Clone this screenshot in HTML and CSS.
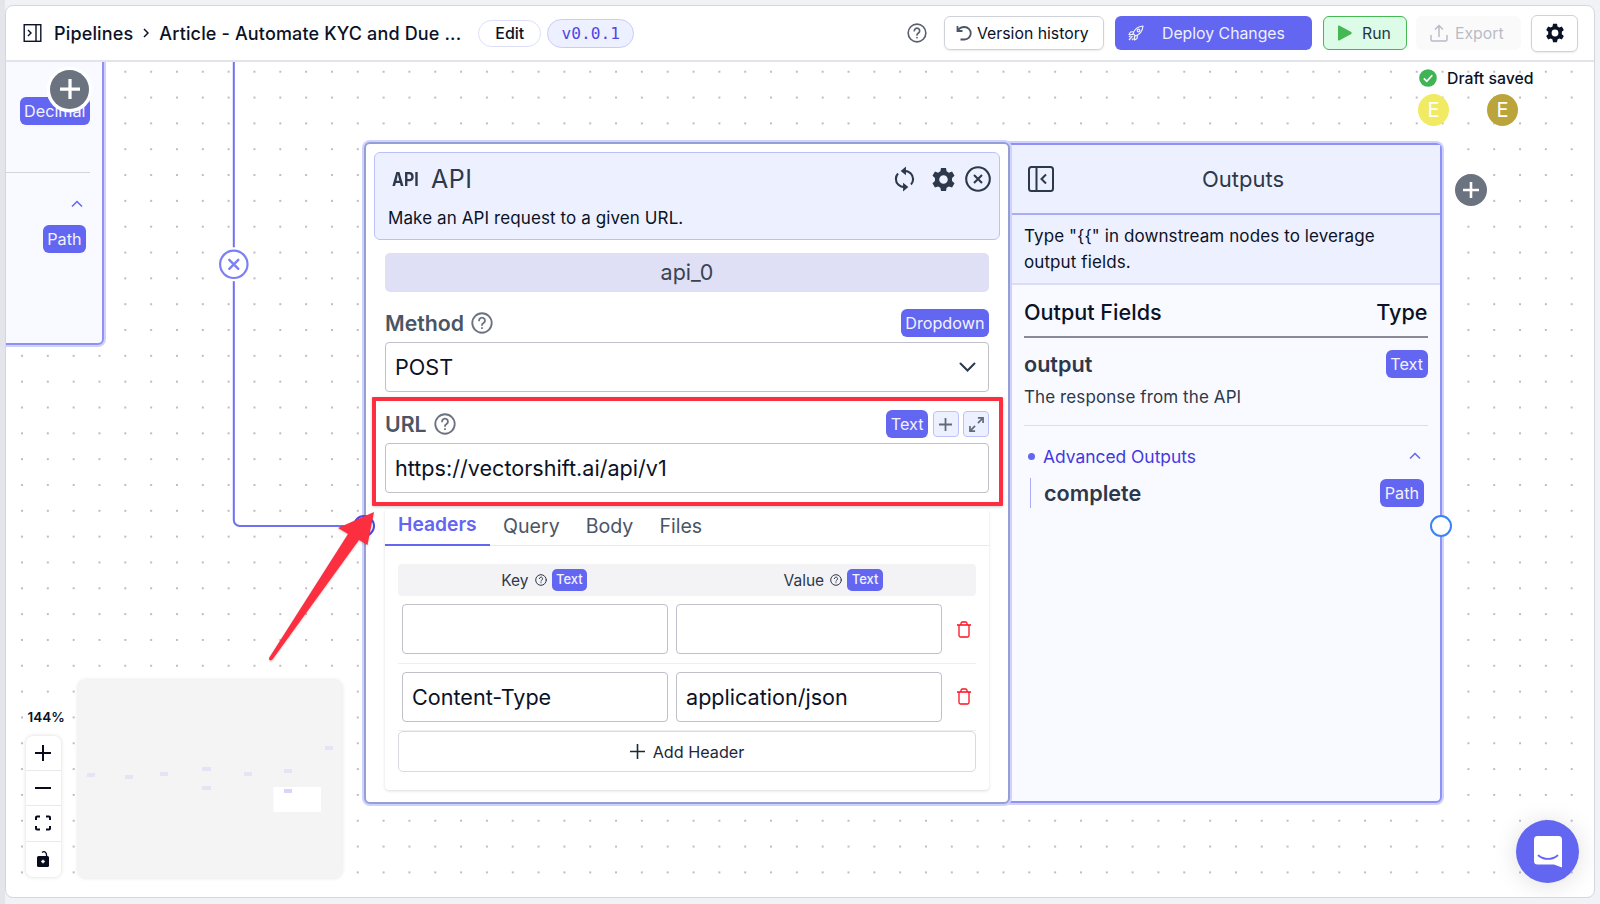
FILE: index.html
```
<!DOCTYPE html>
<html lang="en">
<head>
  <meta charset="UTF-8" />
  <meta name="viewport" content="width=device-width, initial-scale=1.0" />
  <title>Pipelines</title>
  <link rel="stylesheet" href="styles.css">
</head>
<body>
  <svg class="defs" aria-hidden="true">
    <symbol id="help" viewBox="0 0 24 24" fill="none" stroke="currentColor" stroke-width="2" stroke-linecap="round">
      <circle cx="12" cy="12" r="10.6" />
      <path d="M8.8 9.2a3.2 3.2 0 1 1 4.9 2.8c-1.1.7-1.7 1.2-1.7 2.3" />
      <path d="M12 17.4v.2" />
    </symbol>
    <symbol id="gear" viewBox="0 0 24 24">
      <path fill="currentColor" fill-rule="evenodd" d="M9.6 0.5h4.8l.6 3.1 2.2 1.3 3-1.1 2.4 4.1-2.4 2.1v3l2.4 2.1-2.4 4.1-3-1.1-2.2 1.3-.6 3.1H9.6l-.6-3.1-2.2-1.3-3 1.1-2.4-4.1 2.4-2.1v-3L1.4 7.9l2.4-4.1 3 1.1L9 3.6zM12 7.4a4.1 4.1 0 1 0 0 8.2 4.1 4.1 0 0 0 0-8.2z" transform="translate(0 .5)" />
    </symbol>
    <symbol id="up" viewBox="0 0 12 8" fill="none" stroke="#6366f1" stroke-width="1.5">
      <path d="M1 6.5L6 1.5l5 5" />
    </symbol>
    <symbol id="plus" viewBox="0 0 16 16" fill="none" stroke="currentColor">
      <path d="M8 0v16M0 8h16" />
    </symbol>
    <symbol id="trash" viewBox="0 0 14 17" fill="none" stroke="#fb1020" stroke-width="1.3">
      <path d="M0 4h14M2 4v10.500a1.500 1.500 0 0 0 1.500 1.500h7a1.500 1.500 0 0 0 1.500-1.500V4M4 4V2.300A1.300 1.300 0 0 1 5.300 1h3.400A1.300 1.300 0 0 1 10 2.300V4" />
    </symbol>
  </svg>

  <div class="frame">
    <header class="topbar">
      <svg class="panel-icon" viewBox="0 0 18 18" fill="none" stroke="currentColor" stroke-width="1.4">
        <rect x=".7" y=".7" width="16.6" height="16.6" />
        <path d="M12.5 1v16M4.5 6l3 3-3 3" />
      </svg>
      <nav class="crumbs">
        <span>Pipelines</span>
        <svg class="crumb-sep" viewBox="0 0 6 10" fill="none" stroke="currentColor" stroke-width="1.5"><path d="M1 1l4 4-4 4" /></svg>
        <span class="crumb-name">Article - Automate KYC and Due ...</span>
      </nav>
      <button class="edit">Edit</button>
      <span class="version">v0.0.1</span>

      <div class="actions">
        <svg class="help-top"><use href="#help" /></svg>
        <button class="btn history">
          <svg viewBox="0 0 16 16" fill="none" stroke="currentColor" stroke-width="1.8"><path d="M1.5 1v5h5M1.800 5.800C3 3.500 5.200 2 8.500 2a6 6 0 1 1 0 12.500H4.500" /></svg>
          <span>Version history</span>
        </button>
        <button class="btn deploy">
          <svg viewBox="0 0 16 16" fill="none" stroke="currentColor" stroke-width="1.2" stroke-linejoin="round"><path d="M5 8.500C6.500 4.500 9.500 1.500 15 1c-.5 5.500-3.500 8.500-7.500 10zM6 6.500L2.500 7 1 9.500h4M9.500 10l-.5 3.500L6.500 15v-4M4.500 11L1 15M2.500 10.500L1 12M5.500 13.500L4 15" /><circle cx="10.5" cy="5.5" r="1.3" /></svg>
          <span>Deploy Changes</span>
        </button>
        <button class="btn run">
          <svg viewBox="0 0 14 16"><path fill="#45b854" d="M0 1.200Q0 0 1.200.6l12 6.500q1 .9 0 1.800l-12 6.500Q0 16 0 14.800z" /></svg>
          <span>Run</span>
        </button>
        <button class="btn export">
          <svg viewBox="0 0 18 18" fill="none" stroke="currentColor" stroke-width="1.5"><path d="M1 11v4.500a1.500 1.500 0 0 0 1.500 1.500h13a1.500 1.500 0 0 0 1.500-1.500V11M9 13V1.500M5 5.500l4-4 4 4" /></svg>
          <span>Export</span>
        </button>
        <button class="btn settings"><svg><use href="#gear" /></svg></button>
      </div>
    </header>

    <main class="canvas">
      <section class="node prev-node">
        <div class="prev-top"><span class="badge">Decimal</span></div>
        <div class="prev-bottom">
          <svg class="chev-up"><use href="#up" /></svg>
          <span class="badge">Path</span>
        </div>
      </section>
      <div class="add-node add-prev"><svg><use href="#plus" /></svg></div>

      <svg class="edge" viewBox="0 0 380 480" fill="none">
        <path d="M227.800 0V458a6 6 0 0 0 6 6H357" stroke="#6f70f3" stroke-width="2" />
        <circle cx="227.8" cy="202.3" r="17" fill="#fff" />
        <circle cx="227.8" cy="202.3" r="13.7" stroke="#7d7ff4" stroke-width="2.2" />
        <path d="M223.300 197.800l9 9M232.300 197.800l-9 9" stroke="#7d7ff4" stroke-width="2.4" stroke-linecap="round" />
      </svg>

      <section class="node outputs">
        <div class="outputs-head">
          <svg viewBox="0 0 26 26" fill="none" stroke="currentColor" stroke-width="2"><rect x="1" y="1" width="24" height="24" rx="2.5" /><path d="M8.500 1v24M18 8.500L13.500 13l4.500 4.500" /></svg>
          <h2>Outputs</h2>
        </div>
        <p class="outputs-hint">Type "{{" in downstream nodes to leverage output fields.</p>
        <div class="outputs-body">
          <div class="outputs-cols"><span>Output Fields</span><span>Type</span></div>
          <div class="output-row">
            <div class="output-line"><b>output</b><span class="badge">Text</span></div>
            <p>The response from the API</p>
          </div>
          <div class="advanced">
            <span class="dot"></span>
            <span class="advanced-name">Advanced Outputs</span>
            <svg class="chev-up"><use href="#up" /></svg>
          </div>
          <div class="output-line nested"><b>complete</b><span class="badge">Path</span></div>
        </div>
      </section>

      <span class="handle handle-in"></span>
      <section class="node api-node">
        <div class="api-head">
          <div class="api-title">
            <span class="api-glyph"><span>API</span></span>
            <h1>API</h1>
            <svg class="sync" viewBox="0 0 22 26" fill="none" stroke="currentColor" stroke-width="2.2"><path d="M11 4.500c5 0 9 3.500 9 8.500 0 2.200-.8 4.200-2.200 5.700M11 21.500c-5 0-9-3.500-9-8.500 0-2.200.8-4.200 2.200-5.700" /><path fill="currentColor" stroke="none" d="M12.500 0v9L7 4.500zM9.500 17v9l5.500-4.500z" /></svg>
            <svg class="cog"><use href="#gear" /></svg>
            <svg class="close" viewBox="0 0 26 26" fill="none" stroke="currentColor" stroke-width="2.1"><circle cx="13" cy="13" r="11.8" /><path d="M9 9l8 8M17 9l-8 8" /></svg>
          </div>
          <p>Make an API request to a given URL.</p>
        </div>
        <div class="api-body">
          <div class="node-name">api_0</div>

          <div class="field-head">
            <label>Method</label>
            <svg class="help"><use href="#help" /></svg>
            <span class="badge">Dropdown</span>
          </div>
          <div class="input">
            <span>POST</span>
            <svg class="caret" viewBox="0 0 16 10" fill="none" stroke="currentColor" stroke-width="2" stroke-linecap="round"><path d="M1 1.500l7 7 7-7" /></svg>
          </div>

          <div class="field-head url-head">
            <label>URL</label>
            <svg class="help"><use href="#help" /></svg>
            <span class="badge">Text</span>
            <span class="mini-btn"><svg class="mini-plus"><use href="#plus" /></svg></span>
            <span class="mini-btn"><svg class="expand" viewBox="0 0 16 16" fill="none" stroke="currentColor" stroke-width="1.8"><path d="M9.500 1H15v5.500M15 1L9.500 6.500M6.500 15H1V9.500M1 15l5.500-5.500" /></svg></span>
          </div>
          <div class="input"><span>https://vectorshift.ai/api/v1</span></div>

          <div class="tab-card">
            <div class="tabs">
              <span class="tab active">Headers</span>
              <span class="tab">Query</span>
              <span class="tab">Body</span>
              <span class="tab">Files</span>
            </div>
            <div class="table">
              <div class="table-head">
                <div class="th th-key">Key <svg><use href="#help" /></svg><span class="badge small">Text</span></div>
                <div class="th">Value <svg><use href="#help" /></svg><span class="badge small">Text</span></div>
              </div>
              <div class="table-row">
                <div class="input"></div>
                <div class="input"></div>
                <svg class="trash"><use href="#trash" /></svg>
              </div>
              <div class="table-row">
                <div class="input"><span>Content-Type</span></div>
                <div class="input"><span>application/json</span></div>
                <svg class="trash"><use href="#trash" /></svg>
              </div>
              <button class="add-header"><svg><use href="#plus" /></svg>Add Header</button>
            </div>
          </div>
        </div>
      </section>
      <span class="handle handle-out"></span>
      <div class="add-node add-next"><svg><use href="#plus" /></svg></div>

      <div class="highlight"></div>
      <svg class="arrow" viewBox="0 0 120 160"><path fill="#fb2f3f" d="M109 4L102.500 37L94 32L7.500 151.500Q4 154 4 150L83 26L73 20Z" /></svg>

      <aside class="status">
        <div class="saved">
          <svg viewBox="0 0 18 18"><circle cx="9" cy="9" r="8.8" fill="#3fb455" /><path d="M4.800 9.300l3 3 5.500-6" fill="none" stroke="#fff" stroke-width="1.7" /></svg>
          Draft saved
        </div>
        <div class="avatars">
          <span class="avatar yellow">E</span>
          <span class="avatar olive">E</span>
        </div>
      </aside>

      <aside class="zoom">
        <span class="zoom-level">144%</span>
        <div class="zoom-panel">
          <button><svg viewBox="0 0 16 16" stroke="#070b1c" stroke-width="2"><path d="M8 0v16M0 8h16" /></svg></button>
          <button><svg viewBox="0 0 16 16" stroke="#070b1c" stroke-width="2"><path d="M0 8h16" /></svg></button>
          <button><svg viewBox="0 0 16 16" fill="none" stroke="#070b1c" stroke-width="2"><path d="M1 5V2.500A1 1 0 0 1 2 1.500h3M11 1.500h3a1 1 0 0 1 1 1V5M15 11v2.500a1 1 0 0 1-1 1h-3M5 14.500H2a1 1 0 0 1-1-1V11" /></svg></button>
          <button><svg viewBox="0 0 16 16"><path d="M7 1.500C9.500-.5 12 1.500 11.500 5.500" fill="none" stroke="#070b1c" stroke-width="1.3" /><rect x="2" y="5" width="12" height="11" rx="1.5" fill="#070b1c" /><path d="M8 8.700v3.600M6.200 10.500h3.600" stroke="#fff" stroke-width="1.5" /></svg></button>
        </div>
      </aside>

      <svg class="minimap" viewBox="0 0 264 198">
        <rect x="195.5" y="107" width="47.5" height="25" fill="#fff" />
        <g fill="#e3e4f4">
          <rect x="9" y="93" width="8" height="4" />
          <rect x="47" y="95" width="8" height="4" />
          <rect x="82" y="92" width="8" height="4" />
          <rect x="124" y="87" width="9" height="4" />
          <rect x="124" y="106" width="9" height="4" />
          <rect x="166" y="92" width="8" height="4" />
          <rect x="206" y="89" width="8" height="4" />
          <rect x="247" y="66" width="8" height="4" />
          <rect x="206" y="109" width="8" height="4" fill="#d6d7f8" />
        </g>
      </svg>

      <div class="chat">
        <svg viewBox="0 0 28 32"><path fill="#fff" d="M3.500 0h21A3.500 3.500 0 0 1 28 3.500V31.500l-8-3H3.500A3.500 3.500 0 0 1 0 25V3.500A3.500 3.500 0 0 1 3.500 0z" /><path d="M4.500 19.500c5 4.500 14 4.500 19 0" fill="none" stroke="#6366f1" stroke-width="1.8" stroke-linecap="round" /></svg>
      </div>
    </main>
  </div>
</body>
</html>
```

FILE: styles.css
```
:root {
  --indigo: #6366f1;
  --ink: #0b1226;
  --slate: #2d384b;
  --muted: #4b5565;
  --tint: #edf1ff;
  --ring: #cfd1ff;
}

* {
  margin: 0;
  padding: 0;
  box-sizing: border-box;
}

body {
  height: 904px;
  padding: 5px 5px 6px;
  overflow: hidden;
  background: linear-gradient(to right, #e4e5ea 5px, #f1f2f5 5px);
  font-family: Inter, "Liberation Sans", sans-serif;
  color: var(--ink);
}

button {
  font: inherit;
  color: inherit;
  border: none;
  background: none;
}

svg {
  display: block;
  flex: none;
}

.defs {
  position: absolute;
  width: 0;
  height: 0;
}

.frame {
  display: flex;
  flex-direction: column;
  width: 1590px;
  height: 893px;
  border: 1px solid #d5d6de;
  border-radius: 8px;
  background: #fff;
  overflow: hidden;
}

/* top bar */
.topbar {
  display: flex;
  align-items: center;
  height: 56px;
  flex: none;
  padding: 0 16px 0 17px;
  border-bottom: 2px solid #e3e3ea;
}

.panel-icon {
  width: 19px;
  height: 18px;
  margin-right: 12px;
}

.crumbs {
  display: flex;
  align-items: center;
  font-size: 18px;
  font-weight: 500;
  white-space: nowrap;
  letter-spacing: 0.15px;
}

.crumb-sep {
  width: 6px;
  height: 10px;
  margin: 0 10px;
}

.crumb-name {
  width: 319px;
}

.edit {
  width: 63px;
  height: 27px;
  border: 1px solid #dcdefc;
  border-radius: 14px;
  font-size: 16px;
  font-weight: 500;
}

.version {
  width: 87px;
  height: 29px;
  margin-left: 6px;
  border: 1px solid #c9ccfa;
  border-radius: 15px;
  background: var(--tint);
  color: #5046e5;
  font-family: "DejaVu Sans Mono", monospace;
  font-size: 16.2px;
  line-height: 27px;
  text-align: center;
}

.actions {
  display: flex;
  align-items: center;
  margin-left: auto;
}

.help-top {
  width: 20px;
  height: 20px;
  margin-right: 17px;
  color: #596170;
}

.btn {
  display: flex;
  align-items: center;
  height: 34px;
  border-radius: 6px;
  font-size: 15.8px;
  white-space: nowrap;
}

.history {
  width: 160px;
  padding-left: 11px;
  gap: 5px;
  border: 1px solid #d0d2da;
  box-shadow: 0 1px 2px rgba(0, 0, 0, 0.08);
  margin-right: 11px;
}

.history svg {
  width: 16px;
  height: 16px;
  color: #4b5565;
}

.deploy {
  width: 197px;
  padding-left: 13px;
  gap: 18px;
  background: var(--indigo);
  color: #eef0ff;
  margin-right: 11px;
}

.deploy svg {
  width: 16px;
  height: 16px;
}

.run {
  width: 84px;
  padding-left: 14px;
  gap: 10px;
  border: 1.5px solid #45b854;
  background: #dcfce7;
  color: #26364a;
  margin-right: 9px;
}

.run svg {
  width: 14px;
  height: 16px;
}

.export {
  width: 105px;
  padding-left: 14px;
  gap: 7px;
  background: #fafafb;
  color: #b9bcc5;
  margin-right: 10px;
}

.export svg {
  width: 18px;
  height: 18px;
}

.settings {
  width: 47px;
  height: 37px;
  justify-content: center;
  border: 1px solid #d0d2da;
  box-shadow: 0 1px 2px rgba(0, 0, 0, 0.08);
}

.settings svg {
  width: 20px;
  height: 20px;
}

/* canvas */
.canvas {
  position: relative;
  flex: 1;
  overflow: hidden;
  background-image: radial-gradient(circle, #bcbdc8 0.9px, transparent 1.5px);
  background-size: 25.83px 25.83px;
  background-position: 3.1px -3.2px;
}

.node {
  position: absolute;
  border: 2px solid #8f91f6;
  border-radius: 6px;
  background: #f9faff;
  box-shadow: 0 0 0 2px var(--ring);
}

.badge {
  height: 28px;
  padding: 0 4.5px;
  border-radius: 6px;
  background: var(--indigo);
  color: #f2f3ff;
  font-size: 16.2px;
  line-height: 28px;
  white-space: nowrap;
}

.badge.small {
  height: 21.5px;
  border-radius: 5px;
  font-size: 13px;
  line-height: 21.5px;
  font-weight: 500;
}

.chev-up {
  width: 12px;
  height: 8px;
}

.prev-node {
  left: -20px;
  top: -20px;
  width: 118px;
  height: 303px;
}

.prev-top {
  display: flex;
  justify-content: flex-end;
  height: 129px;
  margin-right: 12px;
  padding-top: 53px;
  border-bottom: 1px solid #d5d6dc;
}

.prev-bottom {
  display: flex;
  flex-direction: column;
  align-items: flex-end;
  gap: 17px;
  padding: 27px 16px 0 0;
}

.prev-bottom .chev-up {
  margin-right: 3px;
}

.add-node {
  position: absolute;
  display: flex;
  align-items: center;
  justify-content: center;
  border-radius: 50%;
  background: #6b7280;
  color: #fff;
  stroke-width: 2.6px;
}

.add-prev {
  left: 44px;
  top: 7.500px;
  width: 39px;
  height: 39px;
  box-shadow: 0 0 0 3.5px #fff;
}

.add-prev svg {
  width: 20px;
  height: 20px;
}

.add-next {
  left: 1448.500px;
  top: 112px;
  width: 32px;
  height: 32px;
}

.add-next svg {
  width: 16px;
  height: 16px;
}

.edge {
  position: absolute;
  left: 0;
  top: 0;
  width: 380px;
  height: 480px;
}

.handle {
  position: absolute;
  width: 22px;
  height: 22px;
  border: 2.5px solid #3b82f6;
  border-radius: 50%;
  background: #fff;
}

.handle-in {
  left: 347px;
  top: 452.5px;
  border-color: #4f46e5;
  z-index: 2;
}

.handle-out {
  left: 1423.5px;
  top: 452.5px;
}

/* api node */
.api-node {
  left: 358px;
  top: 80px;
  width: 646px;
  height: 662px;
  padding: 8px 8px 0;
  border-color: #94a0d3;
  background: #fff;
}

.api-head {
  height: 88px;
  padding: 12px 8px 0 13px;
  border: 1.5px solid #bdc1fb;
  border-radius: 6px;
  background: var(--tint);
}

.api-title {
  display: flex;
  align-items: center;
  height: 28px;
  color: var(--slate);
}

.api-glyph {
  width: 43px;
  padding-left: 4px;
  font-size: 18.5px;
  font-weight: 700;
}

.api-glyph span {
  display: inline-block;
  transform: scaleX(0.86);
  transform-origin: left;
}

.api-title h1 {
  font-size: 25px;
  font-weight: 400;
  letter-spacing: 0.5px;
}

.api-title .sync {
  width: 21px;
  height: 26px;
  margin-left: auto;
}

.api-title .cog {
  width: 25px;
  height: 25px;
  margin: 0 9px 0 16px;
}

.api-title .close {
  width: 26px;
  height: 26px;
}

.api-head p {
  margin-top: 14px;
  font-size: 17px;
  line-height: 22px;
  letter-spacing: 0.1px;
}

.api-body {
  padding: 13px 11px 0;
}

.node-name {
  height: 39px;
  border-radius: 5px;
  background: #dfdff5;
  color: #3a4352;
  font-size: 21.5px;
  line-height: 39px;
  text-align: center;
}

.field-head {
  display: flex;
  align-items: center;
  height: 28px;
  margin: 17px 0 5px;
}

.url-head {
  margin-top: 18px;
}

.field-head label {
  font-size: 21.3px;
  font-weight: 600;
  color: var(--muted);
}

.field-head .help {
  width: 22px;
  height: 22px;
  margin: 0 auto 0 7px;
  color: #6b7280;
}

.mini-btn {
  display: flex;
  align-items: center;
  justify-content: center;
  width: 26px;
  height: 26px;
  margin-left: 4.5px;
  border: 1px solid #bdc1fb;
  border-radius: 4px;
  background: var(--tint);
  color: #616a78;
}

.mini-plus {
  width: 13px;
  height: 13px;
  stroke-width: 2.2px;
}

.expand {
  width: 15px;
  height: 15px;
}

.input {
  display: flex;
  align-items: center;
  justify-content: space-between;
  height: 50px;
  padding: 0 12px 0 9px;
  border: 1.5px solid #bfc0c9;
  border-radius: 4px;
  background: #fff;
  font-size: 21.6px;
}

.caret {
  width: 17px;
  height: 10px;
  color: var(--slate);
}

.tab-card {
  height: 281px;
  margin-top: 16px;
  border-radius: 4px;
  box-shadow: 0 1px 3px rgba(0, 0, 0, 0.14);
}

.tabs {
  display: flex;
  height: 37px;
  border-bottom: 1px solid #e8e9ed;
}

.tab {
  margin-left: 26px;
  font-size: 19.6px;
  line-height: 34px;
  color: var(--muted);
}

.tab.active {
  height: 37px;
  margin: 0 -13px 0 0;
  width: 105px;
  padding-left: 13px;
  border-bottom: 2px solid var(--indigo);
  color: var(--indigo);
  font-weight: 600;
  font-size: 19.3px;
  line-height: 31px;
}

.table {
  padding: 18px 13px 0;
}

.table-head {
  display: flex;
  height: 32px;
  border-radius: 4px;
  background: #f3f3f6;
}

.th {
  display: flex;
  align-items: center;
  justify-content: center;
  width: 286px;
  font-size: 15.5px;
  color: var(--slate);
}

.th-key {
  width: 293px;
}

.th svg {
  width: 12px;
  height: 12px;
  margin: 0 5px 0 6px;
}

.table-row {
  display: flex;
  align-items: center;
  gap: 8px;
  height: 67.5px;
  padding-left: 4px;
  border-bottom: 1px solid #efeff2;
}

.table-row .input {
  width: 266px;
}

.trash {
  width: 14px;
  height: 17px;
  margin-left: 6.5px;
}

.add-header {
  display: flex;
  align-items: center;
  justify-content: center;
  gap: 8px;
  width: 100%;
  height: 41px;
  border: 1.5px solid #d8d9e1;
  border-radius: 5px;
  font-size: 16.2px;
  color: #1d273a;
}

.add-header svg {
  width: 15px;
  height: 15px;
  stroke-width: 1.7px;
}

/* outputs panel */
.outputs {
  left: 994px;
  top: 81px;
  width: 441.5px;
  height: 660px;
  background: #f9faff;
}

.outputs-head {
  display: flex;
  align-items: center;
  height: 70px;
  padding: 0 0 0 26px;
  border-bottom: 2px solid #a9acf8;
  background: var(--tint);
  color: var(--slate);
}

.outputs-head svg {
  width: 26px;
  height: 26px;
}

.outputs-head h2 {
  width: 378px;
  font-size: 22px;
  font-weight: 400;
  text-align: center;
}

.outputs-hint {
  height: 70px;
  padding: 9px 40px 0 22px;
  border-bottom: 2px solid #dcddf5;
  background: var(--tint);
  font-size: 17px;
  line-height: 25.8px;
  letter-spacing: 0.1px;
}

.outputs-body {
  padding: 0 12px 0 22px;
}

.outputs-cols {
  display: flex;
  justify-content: space-between;
  height: 53px;
  border-bottom: 2px solid #898a97;
  font-size: 21.6px;
  font-weight: 500;
  line-height: 55px;
}

.output-row {
  height: 88px;
  padding-top: 12px;
  border-bottom: 1.5px solid #dddfe6;
  color: var(--slate);
}

.output-row p {
  font-size: 17px;
  line-height: 22px;
  margin-top: 8px;
  letter-spacing: 0.1px;
}

.output-line {
  display: flex;
  align-items: center;
  justify-content: space-between;
  height: 28px;
  color: var(--slate);
  font-size: 21.6px;
}

.output-line b {
  font-weight: 600;
}

.advanced {
  display: flex;
  align-items: center;
  height: 30px;
  margin-top: 15px;
  padding: 0 7px 0 4px;
  color: #4338e0;
  font-size: 17.4px;
}

.dot {
  width: 7px;
  height: 7px;
  margin-right: 8px;
  border-radius: 50%;
  background: var(--indigo);
}

.advanced .chev-up {
  margin-left: auto;
}

.nested {
  height: 30px;
  margin: 7px 4px 0 6px;
  padding-left: 13px;
  border-left: 1.5px solid #a9acf8;
}

/* annotations */
.highlight {
  position: absolute;
  left: 366px;
  top: 335px;
  width: 630.5px;
  height: 109px;
  border: 4px solid #fb2f3f;
  border-radius: 1px;
  box-shadow: 0 1px 3px rgba(0, 0, 0, 0.2);
  z-index: 3;
}

.arrow {
  position: absolute;
  left: 259px;
  top: 446px;
  width: 120px;
  height: 160px;
  filter: drop-shadow(0 1px 1px rgba(0, 0, 0, 0.2));
  z-index: 4;
}

/* overlays */
.status {
  position: absolute;
  left: 1412px;
  top: 5.5px;
}

.saved {
  display: flex;
  align-items: center;
  gap: 10px;
  height: 21px;
  font-size: 15.8px;
  font-weight: 500;
}

.saved svg {
  width: 18px;
  height: 18px;
  margin-left: 1px;
}

.avatars {
  display: flex;
  gap: 38px;
  margin-top: 5.5px;
}

.avatar {
  width: 31px;
  height: 32px;
  border-radius: 50%;
  color: #fff;
  font-size: 20px;
  line-height: 32px;
  text-align: center;
}

.yellow {
  background: #f1ea63;
}

.olive {
  background: #bba53a;
}

.zoom {
  position: absolute;
  left: 19.5px;
  top: 646px;
}

.zoom-level {
  display: block;
  height: 27.5px;
  padding-left: 2px;
  font-size: 13.5px;
  font-weight: 600;
  line-height: 19px;
}

.zoom-panel {
  width: 35px;
  border-radius: 7px;
  background: #fff;
  box-shadow: 0 0 4px rgba(0, 0, 0, 0.15);
}

.zoom-panel button {
  display: flex;
  align-items: center;
  justify-content: center;
  width: 35px;
  height: 35.4px;
  border-bottom: 1px solid #e9e9ed;
}

.zoom-panel button:last-child {
  border-bottom: none;
}

.zoom-panel svg {
  width: 16px;
  height: 16px;
}

.minimap {
  position: absolute;
  left: 72px;
  top: 618px;
  width: 264px;
  height: 198px;
  border-radius: 8px;
  background: #f4f4f5;
  box-shadow: 0 0 4px rgba(0, 0, 0, 0.12);
}

.chat {
  position: absolute;
  left: 1510px;
  top: 758px;
  display: flex;
  align-items: center;
  justify-content: center;
  width: 63px;
  height: 63px;
  border-radius: 50%;
  background: var(--indigo);
  box-shadow: 0 2px 24px rgba(0, 0, 0, 0.13);
}

.chat svg {
  width: 28px;
  height: 32px;
}
```
